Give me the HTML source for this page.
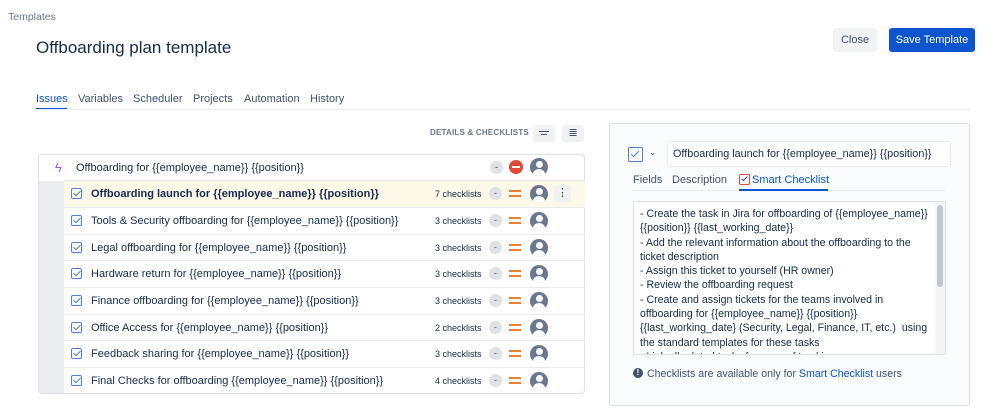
<!DOCTYPE html><html><head><style>
*{box-sizing:border-box;margin:0;padding:0}
body{width:999px;height:420px;background:#fff;font-family:"Liberation Sans",sans-serif;color:#172b4d;position:relative;overflow:hidden}
.a{position:absolute}
.row{position:absolute;left:64px;width:521px;height:26.7px;border-top:1px solid #ebecf0;font-size:11px;display:flex;align-items:center}
.cb{position:absolute;left:7px;width:11px;height:11px;border:1.3px solid #4c7fdf;border-radius:2px}
.cb:after{content:"";position:absolute;left:3px;top:0px;width:3px;height:6px;border:solid #4c7fdf;border-width:0 1.3px 1.3px 0;transform:rotate(45deg)}
.t{position:absolute;left:27px}
.cl{position:absolute;left:371px;font-size:9px}
.dash{position:absolute;left:425px;width:13px;height:13px;border-radius:50%;background:#dfe1e6;font-size:9px;text-align:center;line-height:12px;color:#42526e}
.eq{position:absolute;left:445px;width:12px;height:7px;border-top:2px solid #f07f2f;border-bottom:2px solid #f07f2f}
.av{position:absolute;left:466px;width:18px;height:18px;border-radius:50%;background:#6b778c;overflow:hidden}
.av:before{content:"";position:absolute;left:5.5px;top:3px;width:7px;height:7px;border-radius:50%;background:#fff}
.av:after{content:"";position:absolute;left:3px;top:11px;width:12px;height:10px;border-radius:50%;background:#fff}
.tab{position:absolute;top:93px;font-size:11px;color:#42526e}
.ln{font-size:10.6px;line-height:14.3px;color:#172b4d;white-space:nowrap}
</style></head><body>
<div class="a" style="left:8px;top:11px;font-size:10.5px;color:#6b778c">Templates</div>
<div class="a" style="left:36px;top:38px;font-size:17px;color:#172b4d">Offboarding plan template</div>
<div class="a" style="left:833px;top:28px;width:44px;height:24px;background:#f1f2f4;border-radius:3px;font-size:11px;color:#42526e;text-align:center;line-height:24px">Close</div>
<div class="a" style="left:889px;top:28px;width:86px;height:24px;background:#0c55cf;border-radius:3px;font-size:11px;color:#fff;text-align:center;line-height:24px">Save Template</div>
<div class="tab" style="left:36px;color:#0c55cf">Issues</div>
<div class="a" style="left:36px;top:108px;width:31px;height:2px;background:#0c55cf"></div>
<div class="tab" style="left:78px">Variables</div>
<div class="tab" style="left:133px">Scheduler</div>
<div class="tab" style="left:193px">Projects</div>
<div class="tab" style="left:244px">Automation</div>
<div class="tab" style="left:310px">History</div>
<div class="a" style="left:36px;top:109px;width:934px;height:1px;background:#ebecf0"></div>
<div class="a" style="left:430px;top:128px;font-size:8px;font-weight:bold;color:#6b778c;letter-spacing:.2px">DETAILS &amp; CHECKLISTS</div>
<div class="a" style="left:533px;top:125px;width:22px;height:17px;background:#f1f2f4;border-radius:3px"><div class="a" style="left:6px;top:6px;width:10px;height:1px;background:#42526e"></div><div class="a" style="left:8px;top:9px;width:6px;height:1px;background:#42526e"></div></div>
<div class="a" style="left:562px;top:125px;width:22px;height:17px;background:#f1f2f4;border-radius:3px;font-size:11px;text-align:center;line-height:17px;color:#42526e">≣</div>
<div class="a" style="left:38px;top:154px;width:547px;height:240px;border:1px solid #dfe1e6;border-radius:4px"></div>
<div class="a" style="left:39px;top:181px;width:25px;height:212px;background:#ebecf0"></div>
<div class="a" style="left:55px;top:160px;font-size:13px;color:#a259ff">ϟ</div>
<div class="a" style="left:76px;top:162px;font-size:11px">Offboarding for {{employee_name}} {{position}}</div>
<div class="a" style="left:490px;top:161px;width:13px;height:13px;border-radius:50%;background:#dfe1e6;font-size:9px;text-align:center;line-height:12px">-</div>
<div class="a" style="left:509px;top:160px;width:14px;height:14px;border-radius:50%;background:#e34935"><div class="a" style="left:3px;top:6px;width:8px;height:2px;background:#fff"></div></div>
<div class="av" style="left:530px;top:158px"></div>
<div class="row" style="top:180px;background:#fdf9e8"><div class="cb"></div><div class="t" style="font-weight:bold">Offboarding launch for {{employee_name}} {{position}}</div><div class="cl">7 checklists</div><div class="dash">-</div><div class="eq"></div><div class="av"></div><div class="a" style="left:490px;width:17px;height:17px;background:#f1f2f4;border-radius:3px;text-align:center;font-size:11px;line-height:17px">⋮</div></div>
<div class="row" style="top:207px"><div class="cb"></div><div class="t">Tools &amp; Security offboarding for {{employee_name}} {{position}}</div><div class="cl">3 checklists</div><div class="dash">-</div><div class="eq"></div><div class="av"></div></div>
<div class="row" style="top:234px"><div class="cb"></div><div class="t">Legal offboarding for {{employee_name}} {{position}}</div><div class="cl">3 checklists</div><div class="dash">-</div><div class="eq"></div><div class="av"></div></div>
<div class="row" style="top:260px"><div class="cb"></div><div class="t">Hardware return for {{employee_name}} {{position}}</div><div class="cl">3 checklists</div><div class="dash">-</div><div class="eq"></div><div class="av"></div></div>
<div class="row" style="top:287px"><div class="cb"></div><div class="t">Finance offboarding for {{employee_name}} {{position}}</div><div class="cl">3 checklists</div><div class="dash">-</div><div class="eq"></div><div class="av"></div></div>
<div class="row" style="top:314px"><div class="cb"></div><div class="t">Office Access for {{employee_name}} {{position}}</div><div class="cl">2 checklists</div><div class="dash">-</div><div class="eq"></div><div class="av"></div></div>
<div class="row" style="top:340px"><div class="cb"></div><div class="t">Feedback sharing for {{employee_name}} {{position}}</div><div class="cl">3 checklists</div><div class="dash">-</div><div class="eq"></div><div class="av"></div></div>
<div class="row" style="top:367px"><div class="cb"></div><div class="t">Final Checks for offboarding {{employee_name}} {{position}}</div><div class="cl">4 checklists</div><div class="dash">-</div><div class="eq"></div><div class="av"></div></div>

<div class="a" style="left:609px;top:123px;width:361px;height:283px;background:#fafbfc;border:1px solid #dfe1e6;border-radius:3px"></div>
<div class="a" style="left:628px;top:147px;width:15px;height:15px;border:1.5px solid #4c7fdf;border-radius:2px;background:#fff"><div class="a" style="left:4px;top:1px;width:4px;height:8px;border:solid #4c7fdf;border-width:0 1.5px 1.5px 0;transform:rotate(45deg)"></div></div>
<div class="a" style="left:649px;top:147px;font-size:9px;color:#42526e">⌄</div>
<div class="a" style="left:667px;top:141px;width:284px;height:26px;background:#fff;border:1px solid #ebecf0;border-radius:3px;font-size:10.8px;line-height:24px;padding-left:5px;white-space:nowrap">Offboarding launch for {{employee_name}} {{position}}</div>
<div class="a" style="left:633px;top:174px;font-size:11px;color:#42526e">Fields</div>
<div class="a" style="left:672px;top:174px;font-size:11px;color:#42526e">Description</div>
<div class="a" style="left:739px;top:174px;width:11px;height:11px;border:1.5px solid #e5493a;border-radius:2px;background:#fff"><div class="a" style="left:3px;top:0;width:3px;height:6px;border:solid #0c55cf;border-width:0 1.5px 1.5px 0;transform:rotate(45deg)"></div></div>
<div class="a" style="left:752px;top:174px;font-size:11px;color:#0c55cf">Smart Checklist</div>
<div class="a" style="left:633px;top:190px;width:313px;height:1px;background:#ebecf0"></div>
<div class="a" style="left:739px;top:189px;width:89px;height:2px;background:#0c55cf"></div>
<div class="a" style="left:633px;top:201px;width:313px;height:154px;background:#fff;border:1px solid #dfe1e6;border-radius:2px;overflow:hidden">
<div class="ln" style="position:absolute;left:6px;top:5px">- Create the task in Jira for offboarding of {{employee_name}}<br>{{position}} {{last_working_date}}<br>- Add the relevant information about the offboarding to the<br>ticket description<br>- Assign this ticket to yourself (HR owner)<br>- Review the offboarding request<br>- Create and assign tickets for the teams involved in<br>offboarding for {{employee_name}} {{position}}<br>{{last_working_date} (Security, Legal, Finance, IT, etc.)&nbsp; using<br>the standard templates for these tasks<br>- Link all related tasks for ease of tracking</div>
<div class="a" style="left:301px;top:0;width:11px;height:154px;background:#f4f5f7"></div>
<div class="a" style="left:303px;top:3px;width:6px;height:82px;background:#c1c7d0;border-radius:3px"></div>
</div>
<div class="a" style="left:633px;top:368px;width:10px;height:10px;border-radius:50%;background:#42526e;color:#fff;font-size:8px;text-align:center;line-height:10px;font-weight:bold">!</div>
<div class="a" style="left:647px;top:368px;font-size:10.6px;color:#42526e">Checklists are available only for <span style="color:#0c55cf">Smart Checklist</span> users</div>
</body></html>
